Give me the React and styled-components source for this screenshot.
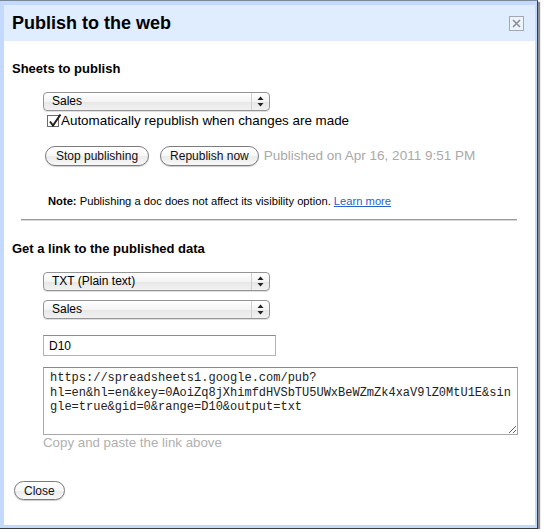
import React from 'react';
import styled, { createGlobalStyle } from 'styled-components';

const GlobalStyle = createGlobalStyle`
  html, body {
    margin: 0;
    padding: 0;
    background: #fff;
  }
  body {
    font-family: 'Liberation Sans', Arial, sans-serif;
    color: #000;
  }
`;

const Dialog = styled.div`
  box-sizing: border-box;
  width: 538px;
  height: 529px;
  background: #c3d9ff;
  border-top: 1px solid #7a889c;
  border-right: 1px solid #3c3c3c;
  border-bottom: 1px solid #3c3c3c;
  padding: 4px 2px 3px 4px;
  box-shadow: 2px 2px 1px rgba(0, 0, 0, 0.45);
  display: flex;
  flex-direction: column;
`;

const Panel = styled.div`
  flex: 1;
  background: #fff;
  display: flex;
  flex-direction: column;
`;

const TitleBar = styled.div`
  height: 36px;
  background: #e0ecff;
  display: flex;
  align-items: center;
  justify-content: space-between;
  padding: 0 11px 0 8px;
`;

const Title = styled.h1`
  margin: 0;
  font-size: 18px;
  font-weight: bold;
  line-height: 20px;
`;

const CloseX = styled.div`
  box-sizing: border-box;
  width: 15px;
  height: 15px;
  border: 1px solid #a3a9b3;
  background: #eef3fb;
  display: flex;
  align-items: center;
  justify-content: center;
`;

const Body = styled.div`
  padding: 0 8px;
  display: flex;
  flex-direction: column;
  align-items: flex-start;
`;

const SectionTitle = styled.h2`
  margin: ${p => p.$top}px 0 0;
  font-size: 13px;
  font-weight: bold;
  line-height: 16px;
`;

const Indent = styled.div`
  padding-left: 31px;
  display: flex;
  flex-direction: column;
  align-items: flex-start;
`;

const SelectBox = styled.div`
  box-sizing: border-box;
  margin-top: ${p => p.$top}px;
  width: 227px;
  height: 19px;
  border: 1px solid #959595;
  border-radius: 4px;
  background: linear-gradient(#ffffff 0%, #f4f4f4 50%, #e6e6e6 51%, #f2f2f2 100%);
  box-shadow: 0 1px 0 rgba(0, 0, 0, 0.12);
  display: flex;
  align-items: center;
  font-size: 12px;
`;

const SelectLabel = styled.span`
  flex: 1;
  padding-left: 8px;
  line-height: 17px;
`;

const SelectArrows = styled.span`
  width: 17px;
  height: 100%;
  border-left: 1px solid #d0d0d0;
  display: flex;
  align-items: center;
  justify-content: center;
`;

const CheckRow = styled.label`
  margin: 2px 0 0 4px;
  display: flex;
  align-items: center;
  gap: 2px;
  font-size: 13.4px;
  line-height: 16px;
`;

const CheckBox = styled.span`
  box-sizing: border-box;
  width: 12px;
  height: 12px;
  border: 1px solid #6a6a6a;
  background: #fff;
  position: relative;
  svg {
    position: absolute;
    left: 0;
    top: -3px;
  }
`;

const ButtonRow = styled.div`
  margin: 17px 0 0 2px;
  display: flex;
  align-items: center;
`;

const PillButton = styled.button`
  box-sizing: border-box;
  height: ${p => p.$h || 20}px;
  margin-left: ${p => p.$gap || 0}px;
  padding: 0 ${p => p.$pad || 10}px;
  border: 1px solid #7c7c7c;
  border-radius: 10px;
  background: linear-gradient(#ffffff 0%, #f7f7f7 50%, #ebebeb 52%, #f8f8f8 100%);
  box-shadow: 0 1px 1px rgba(0, 0, 0, 0.2);
  font-family: 'Liberation Sans', Arial, sans-serif;
  font-size: 12px;
  color: #111;
  line-height: 16px;
  cursor: pointer;
`;

const Status = styled.span`
  margin-left: 5px;
  font-size: 13.5px;
  color: #a9a9a9;
  line-height: 16px;
`;

const Note = styled.p`
  margin: 29px 0 0 5px;
  font-size: 11.2px;
  line-height: 13px;
  b { font-weight: bold; }
  a {
    color: #2a5fcf;
    text-decoration: underline;
  }
`;

const Rule = styled.div`
  margin: 11px 0 0 9px;
  width: 496px;
  border-top: 1px solid #9a9a9a;
  border-bottom: 1px solid #d8d8d8;
`;

const TextInput = styled.input`
  box-sizing: border-box;
  margin-top: 16px;
  width: 233px;
  height: 21px;
  border: 1px solid #b4b4b4;
  border-top-color: #8c8c8c;
  padding: 0 5px;
  font-family: 'Liberation Sans', Arial, sans-serif;
  font-size: 12px;
  color: #000;
  outline: none;
`;

const LinkArea = styled.textarea`
  box-sizing: border-box;
  margin-top: 11px;
  width: 475px;
  height: 68px;
  border: 1px solid #a8a8a8;
  border-top-color: #8a8a8a;
  padding: 3px 6px;
  font-family: 'Liberation Mono', 'Courier New', monospace;
  font-size: 12px;
  line-height: 14.5px;
  color: #222;
  resize: both;
  overflow: hidden;
  white-space: pre;
  outline: none;
`;

const Hint = styled.div`
  font-size: 13.3px;
  line-height: 15px;
  color: #b0b0b0;
`;

const url =
  'https://spreadsheets1.google.com/pub?\n' +
  'hl=en&hl=en&key=0AoiZq8jXhimfdHVSbTU5UWxBeWZmZk4xaV9lZ0MtU1E&sin\n' +
  'gle=true&gid=0&range=D10&output=txt';

function Arrows() {
  return (
    <svg width="7" height="11" viewBox="0 0 7 11">
      <path d="M3.5 0.5 L6.5 4 L0.5 4 Z" fill="#222" />
      <path d="M3.5 10.5 L6.5 7 L0.5 7 Z" fill="#222" />
    </svg>
  );
}

function Select({ label, top }) {
  return (
    <SelectBox $top={top}>
      <SelectLabel>{label}</SelectLabel>
      <SelectArrows><Arrows /></SelectArrows>
    </SelectBox>
  );
}

export default function App() {
  return (
    <>
      <GlobalStyle />
      <Dialog>
        <Panel>
          <TitleBar>
            <Title>Publish to the web</Title>
            <CloseX>
              <svg width="9" height="9" viewBox="0 0 9 9">
                <path d="M1 1 L8 8 M8 1 L1 8" stroke="#8a8f98" strokeWidth="1.6" />
              </svg>
            </CloseX>
          </TitleBar>

          <Body>
            <SectionTitle $top={20}>Sheets to publish</SectionTitle>
            <Indent>
              <Select label="Sales" top={15} />
              <CheckRow>
                <CheckBox>
                  <svg width="14" height="15" viewBox="0 0 14 15">
                    <path d="M2 8.5 L5 12.5 L12.5 1.5" fill="none" stroke="#222" strokeWidth="2" />
                  </svg>
                </CheckBox>
                Automatically republish when changes are made
              </CheckRow>
              <ButtonRow>
                <PillButton>Stop publishing</PillButton>
                <PillButton $gap={11} $pad={9}>Republish now</PillButton>
                <Status>Published on Apr 16, 2011 9:51 PM</Status>
              </ButtonRow>
              <Note>
                <b>Note:</b> Publishing a doc does not affect its visibility option. <a href="#">Learn more</a>
              </Note>
            </Indent>
            <Rule />

            <SectionTitle $top={20}>Get a link to the published data</SectionTitle>
            <Indent>
              <Select label="TXT (Plain text)" top={15} />
              <Select label="Sales" top={9} />
              <TextInput defaultValue="D10" />
              <LinkArea readOnly value={url} />
              <Hint>Copy and paste the link above</Hint>
            </Indent>

            <PillButton $h={19} $pad={9} style={{ marginTop: 31, marginLeft: 2 }}>Close</PillButton>
          </Body>
        </Panel>
      </Dialog>
    </>
  );
}
